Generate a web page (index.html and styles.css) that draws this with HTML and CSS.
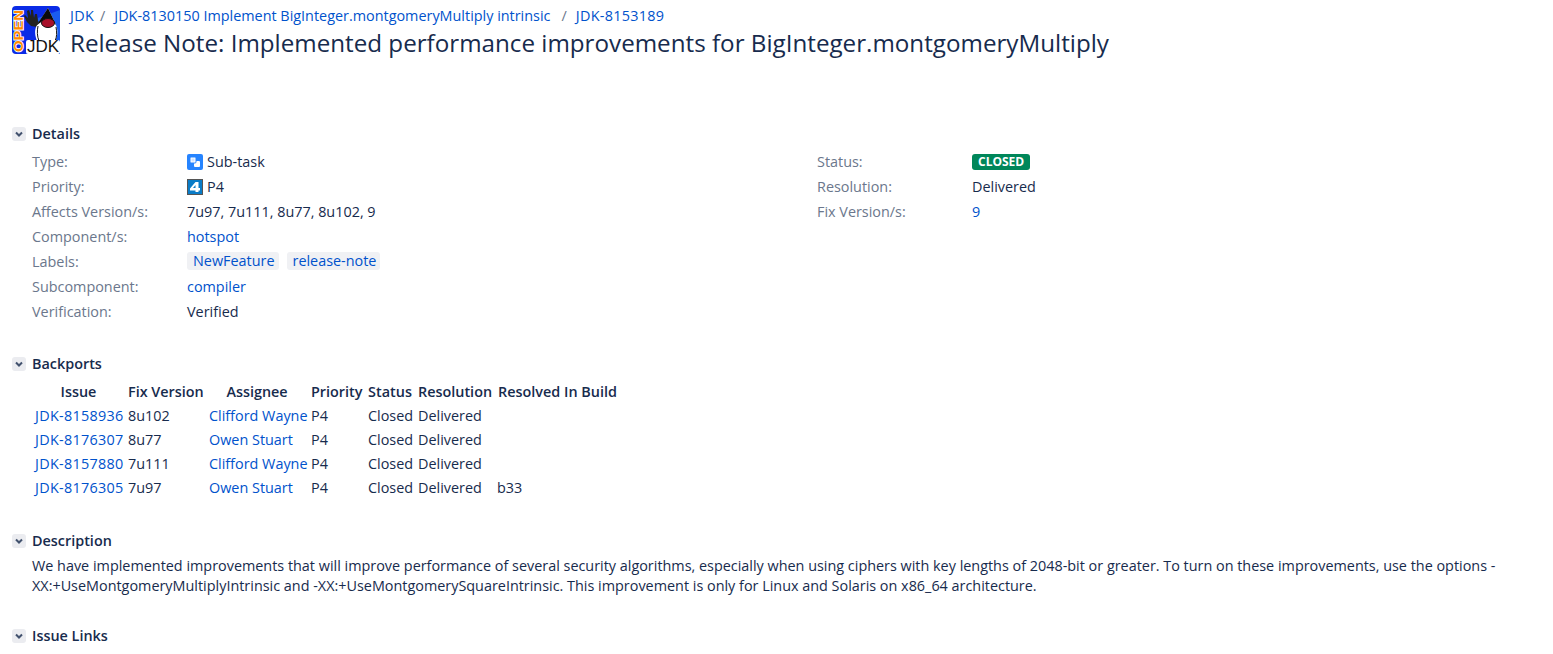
FILE: index.html
```html
<!DOCTYPE html>
<html lang="en">
<head>
    <meta charset="UTF-8">
    <title>JDK-8153189</title>
    <link rel="stylesheet" href="styles.css">
</head>
<body>
    <!-- issue header -->
    <header class="issue-header">
        <svg class="project-logo" viewBox="0 0 48 48" width="48" height="48">
            <rect width="48" height="48" rx="4" fill="#0a2be6"/>
            <path d="M26 48V12L48 4v44z" fill="#1a5cf0"/>
            <text class="logo-open" transform="translate(10.500 46) rotate(-90)" textLength="42" lengthAdjust="spacingAndGlyphs">OPEN</text>
            <path d="M25 21l4 3 2-3-5-6-1-7-2 0-1 4-1-8-2 0 0 6-2-6-2 1 1 7-3-3-1 1 3 6 4 4z" fill="#222"/>
            <path d="M36 2l8 17c2 5 2 11-1 16H25c-2-5-3-11 0-16z" fill="#fff"/>
            <path d="M36 2l9 19c-1-3-5-7-9-7s-8 2-12 6z" fill="#0a0a0a"/>
            <path d="M26 20c-1 5-1 10 1 15M44 21c1 5 1 10-1 14" fill="none" stroke="#111"/>
            <ellipse cx="36" cy="17" rx="6.500" ry="4.500" fill="#a8102a" stroke="#111"/>
            <rect x="14" y="34" width="34" height="14" rx="2" fill="#fff"/>
            <text class="logo-jdk" x="15" y="46" textLength="32" lengthAdjust="spacingAndGlyphs">JDK</text>
        </svg>
        <div class="issue-titles">
            <ol class="breadcrumbs">
                <li><a class="issue-key" href="#">JDK</a></li>
                <li><a href="#">JDK-8130150 Implement BigInteger.montgomeryMultiply intrinsic</a></li>
                <li><a class="issue-key" href="#">JDK-8153189</a></li>
            </ol>
            <h1>Release Note: Implemented performance improvements for BigInteger.montgomeryMultiply</h1>
        </div>
    </header>

    <!-- details -->
    <section class="module details-module">
        <h2><span class="toggle"><svg viewBox="0 0 12 12" width="12" height="12"><path d="M3 4.500l3 3 3-3" fill="none" stroke="#42526e" stroke-width="2"/></svg></span>Details</h2>
        <div class="details-columns">
            <dl class="fields fields-left">
                <dt>Type:</dt>
                <dd><svg class="type-icon" viewBox="0 0 16 16" width="16" height="16"><rect width="16" height="16" rx="2" fill="#2684ff"/><rect x="7" y="7" width="6" height="6" rx="1" fill="#fff"/><rect x="3" y="3" width="6" height="6" rx="1" fill="#fff" stroke="#2684ff"/><rect x="4.500" y="4.500" width="3" height="3" fill="#cfe2ff"/></svg>Sub-task</dd>
                <dt>Priority:</dt>
                <dd><svg class="type-icon" viewBox="0 0 16 16" width="16" height="16"><rect x="0.500" y="0.500" width="15" height="15" fill="#0a7cc7" stroke="#555"/><path d="M8.500 3h3v6h1.500v2.500H11.500V13H8.500v-1.500H3V9.500z" fill="#fff"/><path d="M8.500 6L6 9h2.500z" fill="#0a7cc7"/></svg>P4</dd>
                <dt>Affects Version/s:</dt>
                <dd>7u97, 7u111, 8u77, 8u102, 9</dd>
                <dt>Component/s:</dt>
                <dd><a href="#">hotspot</a></dd>
                <dt>Labels:</dt>
                <dd class="labels"><a class="label" href="#">NewFeature</a><a class="label" href="#">release-note</a></dd>
                <dt>Subcomponent:</dt>
                <dd><a href="#">compiler</a></dd>
                <dt>Verification:</dt>
                <dd>Verified</dd>
            </dl>
            <dl class="fields">
                <dt>Status:</dt>
                <dd><span class="status-closed">CLOSED</span></dd>
                <dt>Resolution:</dt>
                <dd>Delivered</dd>
                <dt>Fix Version/s:</dt>
                <dd><a href="#">9</a></dd>
            </dl>
        </div>
    </section>

    <!-- backports -->
    <section class="module backports-module">
        <h2><span class="toggle"><svg viewBox="0 0 12 12" width="12" height="12"><path d="M3 4.500l3 3 3-3" fill="none" stroke="#42526e" stroke-width="2"/></svg></span>Backports</h2>
        <table class="backports">
            <thead>
                <tr><th class="col-issue">Issue</th><th class="col-fix">Fix Version</th><th class="col-assignee">Assignee</th><th class="col-priority">Priority</th><th class="col-status">Status</th><th class="col-resolution">Resolution</th><th>Resolved In Build</th></tr>
            </thead>
            <tbody>
                <tr><td><a class="issue-key" href="#">JDK-8158936</a></td><td>8u102</td><td><a href="#">Clifford Wayne</a></td><td>P4</td><td>Closed</td><td>Delivered</td><td></td></tr>
                <tr><td><a class="issue-key" href="#">JDK-8176307</a></td><td>8u77</td><td><a href="#">Owen Stuart</a></td><td>P4</td><td>Closed</td><td>Delivered</td><td></td></tr>
                <tr><td><a class="issue-key" href="#">JDK-8157880</a></td><td>7u111</td><td><a href="#">Clifford Wayne</a></td><td>P4</td><td>Closed</td><td>Delivered</td><td></td></tr>
                <tr><td><a class="issue-key" href="#">JDK-8176305</a></td><td>7u97</td><td><a href="#">Owen Stuart</a></td><td>P4</td><td>Closed</td><td>Delivered</td><td>b33</td></tr>
            </tbody>
        </table>
    </section>

    <!-- description -->
    <section class="module description-module">
        <h2><span class="toggle"><svg viewBox="0 0 12 12" width="12" height="12"><path d="M3 4.500l3 3 3-3" fill="none" stroke="#42526e" stroke-width="2"/></svg></span>Description</h2>
        <p class="description">We have implemented improvements that will improve performance of several security algorithms, especially when using ciphers with key lengths of 2048-bit or greater. To turn on these improvements, use the options -XX:+UseMontgomeryMultiplyIntrinsic and -XX:+UseMontgomerySquareIntrinsic. This improvement is only for Linux and Solaris on x86_64 architecture.</p>
    </section>

    <!-- issue links -->
    <section class="module links-module">
        <h2><span class="toggle"><svg viewBox="0 0 12 12" width="12" height="12"><path d="M3 4.500l3 3 3-3" fill="none" stroke="#42526e" stroke-width="2"/></svg></span>Issue Links</h2>
    </section>
</body>
</html>
```

FILE: styles.css
```css
* {
    margin: 0;
    padding: 0;
    box-sizing: border-box;
}

html, body {
    height: 654px;
    overflow: hidden;
}

body {
    font-family: "Open Sans", "Noto Sans", sans-serif;
    font-size: 14.4px;
    line-height: 20px;
    color: #172b4d;
    background: #fff;
}

a {
    color: #0052cc;
    text-decoration: none;
}

.issue-header {
    display: flex;
    gap: 10px;
    padding: 6px 12px 0;
    height: 124px;
}

.project-logo {
    flex: none;
}

.logo-open {
    font: bold 12.5px "Liberation Sans", sans-serif;
    fill: #ff8a00;
    stroke: #fff;
    stroke-width: 1.500px;
    paint-order: stroke;
}

.logo-jdk {
    font: 400 16px "Liberation Sans", sans-serif;
    fill: #111;
}

.breadcrumbs {
    display: flex;
    list-style: none;
    height: 20px;
}

.breadcrumbs li + li::before {
    content: "/";
    color: #6b778c;
    padding: 0 9px 0 6px;
}

.breadcrumbs li + li + li {
    margin-left: 5px;
}

h1 {
    font-size: 24.2px;
    font-weight: 400;
    line-height: 32px;
    margin-top: 1px;
}

h2 {
    display: flex;
    align-items: center;
    font-size: 14.4px;
    font-weight: 600;
    line-height: 20px;
    padding-left: 12px;
}

.toggle {
    display: flex;
    align-items: center;
    justify-content: center;
    width: 14px;
    height: 14px;
    margin-right: 6px;
    background: #ebecf0;
    border-radius: 3px;
}

.details-columns {
    display: flex;
    margin-top: 5px;
    padding-left: 32px;
}

.fields {
    display: grid;
    grid-template-columns: 155px auto;
    grid-auto-rows: 25px;
    align-items: center;
    align-content: start;
}

.fields-left {
    width: 785px;
}

dt {
    color: #6b778c;
}

dd {
    display: flex;
    align-items: center;
}

.type-icon {
    margin-right: 4px;
}

.labels {
    gap: 8px;
}

.label {
    padding: 0 4px 0 6px;
    margin-bottom: 2px;
    line-height: 18px;
    background: #f0f1f4;
    border-radius: 3px;
}

.status-closed {
    padding: 0 6px;
    font-size: 12px;
    font-weight: 700;
    line-height: 16px;
    color: #fff;
    background: #00875a;
    border-radius: 3px;
}

.backports-module {
    margin-top: 30px;
}

.backports {
    margin: 6px 0 0 32px;
    width: 589px;
    table-layout: fixed;
    border-collapse: collapse;
}

.backports th, .backports td {
    height: 24px;
    padding: 0 3px;
    text-align: left;
    white-space: nowrap;
}

.backports th {
    font-weight: 600;
    text-align: center;
}

.issue-key {
    letter-spacing: 0.3px;
}

.col-issue { width: 93px; }
.col-fix { width: 81px; }
.col-assignee { width: 102px; }
.col-priority { width: 57px; }
.col-status { width: 50px; }
.col-resolution { width: 79px; }

.description-module {
    margin-top: 31px;
}

.description {
    margin-top: 5px;
    padding: 0 32px;
}

.links-module {
    margin-top: 30px;
}
```
